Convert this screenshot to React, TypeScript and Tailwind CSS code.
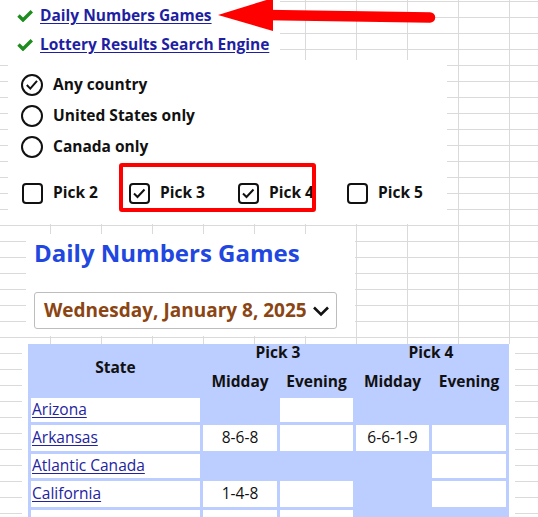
import React from "react";

const FONT = { fontFamily: '"Open Sans", "Noto Sans", sans-serif' };

function GreenCheck() {
  return (
    <svg width="16" height="12" viewBox="0 0 16 12" className="shrink-0">
      <path d="M1.5 5.5 L6 10 L14.8 1.3" fill="none" stroke="#1e8c1e" strokeWidth="3.4" />
    </svg>
  );
}

function Radio({ checked }: { checked?: boolean }) {
  return (
    <svg width="22" height="22" viewBox="0 0 22 22" className="shrink-0">
      <circle cx="11" cy="11" r="10" fill="white" stroke="#111" strokeWidth="2" />
      {checked && (
        <path d="M5.8 11 L9.3 14.6 L16 6.8" fill="none" stroke="#111" strokeWidth="2" />
      )}
    </svg>
  );
}

function Box({ checked }: { checked?: boolean }) {
  return (
    <svg width="21" height="21" viewBox="0 0 21 21" className="shrink-0">
      <rect x="1" y="1" width="19" height="19" rx="3" fill="white" stroke="#111" strokeWidth="2" />
      {checked && (
        <path d="M5 10.5 L8.5 14 L15.5 6.5" fill="none" stroke="#111" strokeWidth="2" />
      )}
    </svg>
  );
}

const rows: { name: string; cells: (string | null)[]; h: string }[] = [
  { name: "Arizona", cells: [null, "", null, null], h: "h-[24px]" },
  { name: "Arkansas", cells: ["8-6-8", "", "6-6-1-9", ""], h: "h-[26px]" },
  { name: "Atlantic Canada", cells: [null, null, null, ""], h: "h-[24px]" },
  { name: "California", cells: ["1-4-8", "", null, ""], h: "h-[26px]" },
  { name: "", cells: ["", "", null, null], h: "h-[26px]" },
];

export default function App() {
  return (
    <div
      style={FONT}
      className="relative min-h-screen w-full overflow-hidden bg-white bg-[linear-gradient(to_right,#dadada_1px,transparent_1px),linear-gradient(to_bottom,#dadada_1px,transparent_1px)] bg-[size:51px_16px] bg-[position:50px_1px]"
    >
      {/* Links panel */}
      <div className="flex h-[60px] w-[280px] flex-col bg-white pl-[17px] pt-[1px]">
        <div className="flex h-[29px] items-center gap-[7px]">
          <GreenCheck />
          <a href="#" className="text-[15.5px] font-bold leading-none text-[#1f1fa3] underline underline-offset-2">
            Daily Numbers Games
          </a>
        </div>
        <div className="flex h-[29px] items-center gap-[7px]">
          <GreenCheck />
          <a href="#" className="text-[15.5px] font-bold leading-none text-[#1f1fa3] underline underline-offset-2">
            Lottery Results Search Engine
          </a>
        </div>
      </div>

      {/* Options panel */}
      <div className="relative ml-[8px] w-[439px] bg-white pb-[16px] pt-[9px] text-[15.5px] font-bold text-[#111]">
        <div className="flex flex-col pl-[13px]">
          <label className="flex h-[31px] items-center gap-[10px]">
            <Radio checked />
            <span>Any country</span>
          </label>
          <label className="flex h-[31px] items-center gap-[10px]">
            <Radio />
            <span>United States only</span>
          </label>
          <label className="flex h-[31px] items-center gap-[10px]">
            <Radio />
            <span>Canada only</span>
          </label>
        </div>
        <div className="mt-[16px] grid h-[30px] grid-cols-[107px_109px_109px_auto] items-center pl-[14px]">
          <label className="flex items-center gap-[10px]">
            <Box />
            <span>Pick 2</span>
          </label>
          <label className="flex items-center gap-[10px]">
            <Box checked />
            <span>Pick 3</span>
          </label>
          <label className="flex items-center gap-[10px]">
            <Box checked />
            <span>Pick 4</span>
          </label>
          <label className="flex items-center gap-[10px]">
            <Box />
            <span>Pick 5</span>
          </label>
        </div>
        {/* red annotation box */}
        <div className="pointer-events-none absolute left-[111px] top-[103px] h-[49px] w-[197px] rounded-[3px] border-[4px] border-[#ff0000]" />
      </div>

      {/* Heading + date panel */}
      <div className="ml-[26px] mt-[10px] w-[329px] bg-white pb-[7px] pl-[8px] pt-[3px]">
        <h1 className="text-[24px] font-bold leading-[32px] text-[#2147e0]">Daily Numbers Games</h1>
        <div className="mt-[23px] flex h-[37px] w-[303px] items-center justify-between rounded-[3px] border border-[#bdbdbd] bg-white pl-[9px] pr-[6px]">
          <span className="text-[19px] font-bold text-[#8b4513]">Wednesday, January 8, 2025</span>
          <svg width="18" height="12" viewBox="0 0 18 12">
            <path d="M2 2.5 L9 9.5 L16 2.5" fill="none" stroke="#111" strokeWidth="2.6" />
          </svg>
        </div>
      </div>

      {/* Table panel */}
      <div className="ml-[22px] mt-[8px] w-[493px] bg-white px-[6px] pb-[6px]">
        <table className="w-[481px] table-fixed border-separate border-spacing-[3px] bg-[#bccdff] text-[15.5px] text-[#111]">
          <colgroup>
            <col className="w-[169px]" />
            <col className="w-[74px]" />
            <col className="w-[73px]" />
            <col className="w-[73px]" />
            <col className="w-[74px]" />
          </colgroup>
          <thead>
            <tr className="h-[18px]">
              <th rowSpan={2} className="p-0 align-middle font-bold leading-none">
                <span className="relative -top-[3px]">State</span>
              </th>
              <th colSpan={2} className="p-0 font-bold leading-none">
                <span className="relative -top-[3px]">Pick 3</span>
              </th>
              <th colSpan={2} className="p-0 font-bold leading-none">
                <span className="relative -top-[3px]">Pick 4</span>
              </th>
            </tr>
            <tr className="h-[27px]">
              <th className="p-0 font-bold leading-none">Midday</th>
              <th className="p-0 font-bold leading-none">Evening</th>
              <th className="p-0 font-bold leading-none">Midday</th>
              <th className="p-0 font-bold leading-none">Evening</th>
            </tr>
          </thead>
          <tbody>
            {rows.map((r, ri) => (
              <tr key={ri} className={r.h}>
                <td className="bg-white p-0 pl-[1px] leading-none">
                  {r.name && (
                    <a href="#" className="text-[#2323a0] underline underline-offset-2">
                      {r.name}
                    </a>
                  )}
                </td>
                {r.cells.map((c, i) =>
                  c === null ? (
                    <td key={i} className="p-0" />
                  ) : (
                    <td key={i} className="bg-white p-0 text-center leading-none">
                      {c}
                    </td>
                  )
                )}
              </tr>
            ))}
          </tbody>
        </table>
      </div>

      {/* red arrow annotation */}
      <svg className="pointer-events-none absolute left-0 top-0" width="538" height="40" viewBox="0 0 538 40">
        <polygon points="218,15 273,-2 273,31" fill="#ff0000" />
        <line x1="266" y1="15" x2="430" y2="17.5" stroke="#ff0000" strokeWidth="10.5" strokeLinecap="round" />
      </svg>
    </div>
  );
}
